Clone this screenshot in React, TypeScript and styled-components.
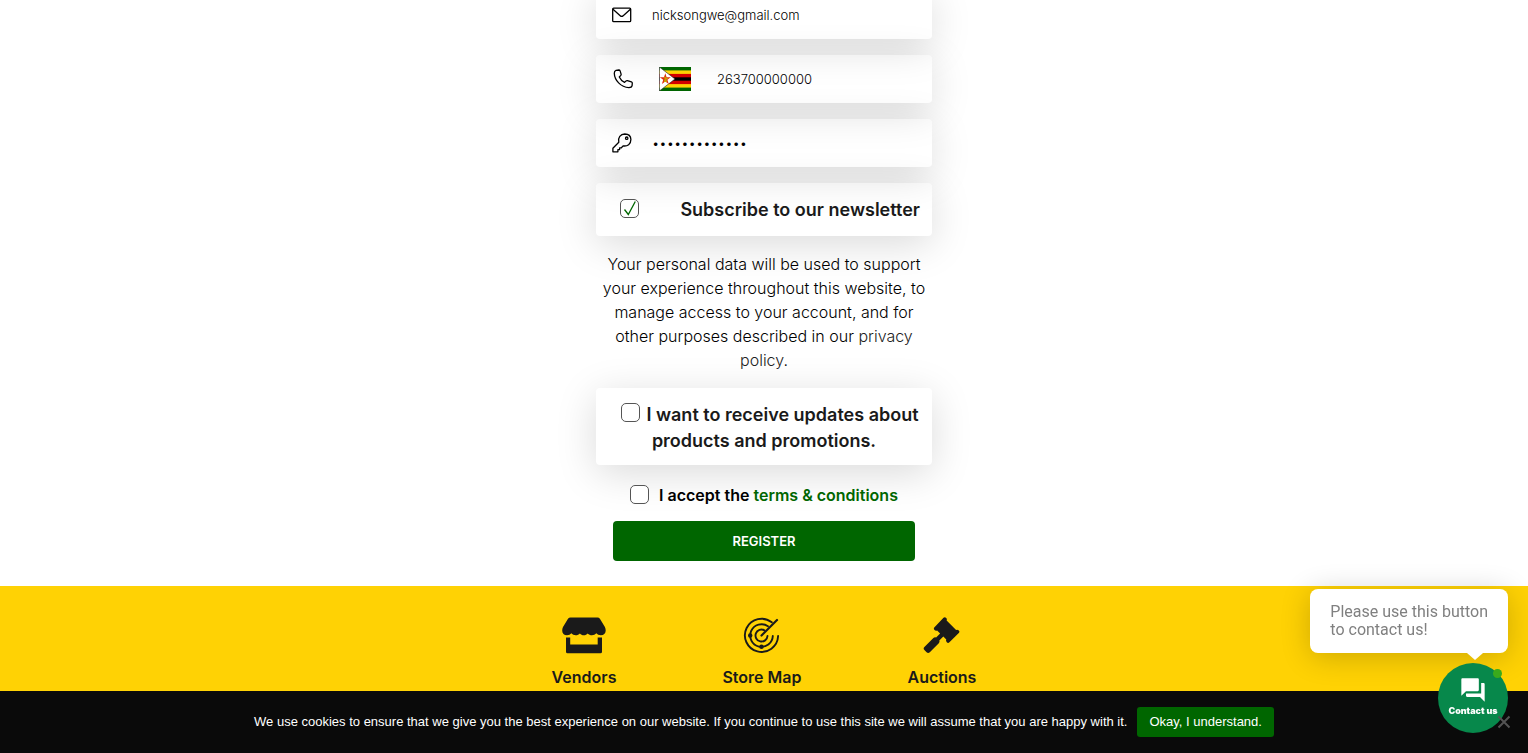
import React from "react";
import styled, { createGlobalStyle } from "styled-components";
import { MdForum } from "react-icons/md";

const GlobalStyle = createGlobalStyle`
  *, *::before, *::after { box-sizing: border-box; }
  body {
    margin: 0;
    background: #fff;
    color: #000;
    font-family: Inter, "Liberation Sans", sans-serif;
    overflow: hidden;
  }
  button, input { font: inherit; color: inherit; }
`;

const Page = styled.div`
  display: flex;
  flex-direction: column;
  min-height: 100vh;
`;

const Form = styled.form`
  display: flex;
  flex-direction: column;
  gap: 16px;
  width: 336px;
  max-width: 100%;
  margin: -9px auto 25px;
`;

const Card = styled.div`
  border-radius: 4px;
  box-shadow: 0 8px 40px rgba(0, 0, 0, 0.15);
`;

const Field = styled(Card)`
  display: flex;
  align-items: center;
  height: 48px;
  padding: 0 14px;
  gap: 18px;

  > svg { flex: none; }
`;

const TextInput = styled.input`
  flex: 1;
  min-width: 0;
  padding: 0;
  border: 0;
  outline: 0;
  background: transparent;
  font-size: 13px;
  font-weight: 350;
  line-height: 20px;
`;

const FlagButton = styled.button`
  display: flex;
  flex: none;
  margin: 0 8px 0 7px;
  padding: 0;
  border: 0;
  background: none;
`;

const Subscribe = styled(Card)`
  display: flex;
  align-items: center;
  justify-content: space-between;
  height: 53px;
  padding: 0 12px 0 24px;
`;

const Updates = styled(Card)`
  padding: 14px 12px 11px;
  text-align: center;
`;

const OptionLabel = styled.label`
  color: #1a1a1a;
  font-size: 18px;
  font-weight: 600;
  line-height: 26px;
`;

const CheckWrap = styled.span`
  position: relative;
  display: inline-flex;
  margin-bottom: 2px;

  svg {
    position: absolute;
    inset: 0;
    pointer-events: none;
  }
`;

const Box = styled.input`
  appearance: none;
  width: 19px;
  height: 19px;
  margin: 0;
  border: 1px solid #555;
  border-radius: 5px;
  background: #fff;
`;

const InlineBox = styled(Box)`
  margin: 0 6px 0 12px;
  vertical-align: -1px;
`;

const Notice = styled.p`
  margin: 0;
  font-size: 16px;
  font-weight: 350;
  line-height: 24px;
  text-align: center;
`;

const PolicyLink = styled.a`
  color: #222;
  text-decoration: none;
`;

const Accept = styled.div`
  display: flex;
  align-items: center;
  justify-content: center;
  gap: 10px;
  height: 24px;
  margin: 2px 0 -2px;
  color: #000;
  font-size: 16px;
  font-weight: 600;

  input { margin-bottom: 2px; }
`;

const TermsLink = styled.a`
  color: #060;
  text-decoration: none;
`;

const Register = styled.button`
  height: 40px;
  margin: 0 17px;
  border: 0;
  border-radius: 4px;
  background: #060;
  color: #fff;
  font-size: 13px;
  font-weight: 600;
`;

const Footer = styled.footer`
  flex: 1;
  display: flex;
  justify-content: center;
  gap: 106px;
  padding: 31px 0 80px;
  background: #ffd204;
`;

const FooterLink = styled.a`
  display: flex;
  flex-direction: column;
  align-items: center;
  gap: 11px;
  color: #1a1a1a;
  font-size: 16px;
  font-weight: 600;
  line-height: 24px;
  text-decoration: none;
`;

const CookieBar = styled.aside`
  position: fixed;
  inset: auto 0 0;
  display: flex;
  align-items: center;
  justify-content: center;
  gap: 10px;
  min-height: 62px;
  background: #0a0a0a;
  color: #fff;
  font-family: "Liberation Sans", Arial, sans-serif;
  font-size: 13px;
  line-height: 20px;
`;

const CookieButton = styled.button`
  height: 30px;
  padding: 0 12px;
  border: 0;
  border-radius: 3px;
  background: #060;
  color: #fff;
`;

const CloseButton = styled.button`
  position: fixed;
  right: 17px;
  bottom: 24px;
  display: flex;
  padding: 0;
  border: 0;
  background: none;
  color: #535353;
`;

const Widget = styled.div`
  position: fixed;
  right: 20px;
  bottom: 20px;
  display: flex;
  flex-direction: column;
  align-items: flex-end;
  gap: 10px;
`;

const Bubble = styled.div`
  position: relative;
  padding: 14px 20px;
  border-radius: 8px;
  background: #fff;
  box-shadow: 0 4px 30px rgba(0, 0, 0, 0.2);
  color: #808080;
  font-family: Roboto, sans-serif;
  font-size: 16px;
  line-height: 18px;

  &::after {
    content: "";
    position: absolute;
    top: 100%;
    right: 25px;
    border: solid transparent;
    border-width: 7px 8px 0;
    border-top-color: #fff;
  }
`;

const ContactButton = styled.button`
  position: relative;
  display: flex;
  flex-direction: column;
  align-items: center;
  gap: 1px;
  width: 70px;
  height: 70px;
  padding: 13px 0 0;
  border: 0;
  border-radius: 50%;
  background: #07884b;
  color: #fff;
  font-size: 9px;
  font-weight: 900;
  line-height: 12px;
  white-space: nowrap;

  &::after {
    content: "";
    position: absolute;
    top: 6px;
    right: 6px;
    width: 9px;
    height: 9px;
    border-radius: 50%;
    background: #3aaa1c;
  }
`;

const LineIcon = styled.svg.attrs({
  width: 24,
  height: 24,
  viewBox: "0 0 24 24",
  "aria-hidden": true,
})`
  fill: none;
  stroke: #000;
  stroke-width: 1.3;
  stroke-linecap: round;
  stroke-linejoin: round;
`;

const EnvelopeIcon = () => (
  <LineIcon>
    <rect x="2.700" y="5.200" width="18" height="13.500" rx="1" />
    <path d="m3 6.200 7.200 6.500q1.500 1.300 3 0l7.200-6.500" />
  </LineIcon>
);

const PhoneIcon = () => (
  <LineIcon>
    <path d="M6 3.400 8.800 3q1 0 1.300.9l1 3.200q.2.700-.3 1.300L9.300 10c1 2.300 3 4.300 5.300 5.400l1.500-1.500q.6-.5 1.300-.3l4 1.300q.9.300.9 1.100l-.2 2.600c-.3 1.500-1.600 2-3.200 2C10.800 20.200 4.500 13.200 4.300 6.200q0-2.300 1.700-2.800z" />
  </LineIcon>
);

const KeyIcon = () => (
  <LineIcon>
    <path d="M8.800 11.300C7.700 6.500 10.500 3.200 14.800 3c3.700 0 6 2.400 6.100 5.600 0 4.500-3.400 6.900-7.800 6.300l-1.700 1.900H9.600v1.800H7.900v2.200H2.900v-3.600z" />
    <circle cx="16.700" cy="7.200" r="1.200" />
  </LineIcon>
);

const ZimbabweFlag = () => (
  <svg width="32" height="24" viewBox="0 0 32 24" aria-hidden="true">
    <path fill="#060" d="M0 0h32v24H0z" />
    <path fill="#ffd204" d="M0 3.4h32v17.2H0z" />
    <path fill="#d40000" d="M0 6.9h32v10.2H0z" />
    <path fill="#000" d="M0 10.3h32v3.4H0z" />
    <path fill="#fff" stroke="#222" strokeWidth=".6" d="M.4 0v24L16 12z" />
    <path fill="#e02a10" d="m6.300 6.200 1.300 4.100h4.200l-3.400 2.500 1.300 4.100-3.400-2.500L2.900 16.900l1.300-4.100L.800 10.300H5z" />
    <path fill="#c9a300" d="m5 9 2 1.600 2.500.4-2 1.500.5 2.500H4.800L5.600 12z" />
  </svg>
);

const StoreIcon = () => (
  <svg width="44" height="37" viewBox="0 0 44 37" fill="#1a1a1a" aria-hidden="true">
    <path d="M8.500.500h27q1.500 0 2.400 1.300l5 8.200q.8 1.500.8 3.500c0 3-2 4.700-4.900 4.700-2 0-3.400-.8-4.400-2-1.200 1.300-2.800 2-4.500 2-1.700 0-3.100-.7-4.200-1.800-1.100 1.100-2.200 1.800-3.900 1.800-1.700 0-2.900-.7-3.900-1.800-1.100 1.100-2.500 1.800-4.200 1.800-1.700 0-3.300-.7-4.400-2-1 1.200-2.300 2-4.300 2-3 0-4.800-1.700-4.800-4.700q0-2 .8-3.500l5-8.200Q7 .5 8.500.5z" />
    <path d="M4 20.500h4.200V27.500h27.500v-7H40v14.300q0 1.500-1.500 1.500h-33Q4 36.300 4 34.800z" />
  </svg>
);

const RadarIcon = () => (
  <svg width="37" height="37" viewBox="0 0 37 37" fill="none" stroke="#1a1a1a" strokeWidth="1.900" strokeLinecap="round" aria-hidden="true">
    <path d="M28.800 5.300A16.600 16.600 0 1 0 35.100 19" />
    <path d="M25 9.300A11.300 11.300 0 1 0 29.800 19" />
    <path d="M21.400 13.300A6 6 0 1 0 24.500 19" />
    <path d="M18.500 18.500 34 3" strokeWidth="2.200" />
    <circle cx="7.200" cy="18.500" r="1.300" fill="#1a1a1a" />
    <circle cx="18.500" cy="29.800" r="1.300" fill="#1a1a1a" />
  </svg>
);

const GavelIcon = () => (
  <svg width="37" height="37" viewBox="0 0 37 37" fill="#1a1a1a" aria-hidden="true">
    <path d="M20.500.800q1.200-1.200 2.500 0 1.300 1.300.6 2.600l9.500 9.500q1.400-.7 2.700.5 1.300 1.300 0 2.500L26.400 25.300q-1.300 1.200-2.600 0-1.200-1.300-.5-2.700l-3-3-4 4q.6 1.300-.5 2.600l-9 9q-1.600 1.500-3.200 0l-2.200-2.200q-1.500-1.500 0-3.100l9-9q1.300-1.200 2.700-.5l4-4-3-3q-1.400.7-2.600-.5-1.300-1.400 0-2.600z" />
  </svg>
);

export default function App() {
  return (
    <Page>
      <GlobalStyle />
      <Form onSubmit={(event) => event.preventDefault()}>
        <Field>
          <EnvelopeIcon />
          <TextInput type="email" aria-label="Email address" defaultValue="nicksongwe@gmail.com" />
        </Field>
        <Field>
          <PhoneIcon />
          <FlagButton type="button" aria-label="Zimbabwe"><ZimbabweFlag /></FlagButton>
          <TextInput type="tel" aria-label="Phone number" defaultValue="263700000000" />
        </Field>
        <Field>
          <KeyIcon />
          <TextInput type="password" aria-label="Password" defaultValue="longpassword1" />
        </Field>
        <Subscribe>
          <CheckWrap>
            <Box type="checkbox" id="newsletter" defaultChecked />
            <svg width="19" height="19" viewBox="0 0 19 19" fill="none" stroke="#060" strokeWidth="1.300" aria-hidden="true">
              <path d="m4.500 10.500 3.800 5L15.300 2.500" />
            </svg>
          </CheckWrap>
          <OptionLabel htmlFor="newsletter">Subscribe to our newsletter</OptionLabel>
        </Subscribe>
        <Notice>
          Your personal data will be used to support your experience throughout this website, to manage
          access to your account, and for other purposes described in our{" "}
          <PolicyLink href="#privacy">privacy policy</PolicyLink>.
        </Notice>
        <Updates>
          <OptionLabel>
            <InlineBox type="checkbox" />
            I want to receive updates about products and promotions.
          </OptionLabel>
        </Updates>
        <Accept>
          <Box type="checkbox" id="terms" />
          <label htmlFor="terms">
            I accept the <TermsLink href="#terms">terms &amp; conditions</TermsLink>
          </label>
        </Accept>
        <Register type="submit">REGISTER</Register>
      </Form>
      <Footer>
        <FooterLink href="#vendors"><StoreIcon />Vendors</FooterLink>
        <FooterLink href="#map"><RadarIcon />Store Map</FooterLink>
        <FooterLink href="#auctions"><GavelIcon />Auctions</FooterLink>
      </Footer>
      <CookieBar aria-label="Cookie notice">
        <span>
          We use cookies to ensure that we give you the best experience on our website. If you continue to
          use this site we will assume that you are happy with it.
        </span>
        <CookieButton type="button">Okay, I understand.</CookieButton>
      </CookieBar>
      <Widget>
        <Bubble>Please use this button<br />to contact us!</Bubble>
        <ContactButton type="button"><MdForum size={28} />Contact us</ContactButton>
      </Widget>
      <CloseButton type="button" aria-label="Close">
        <svg width="14" height="14" viewBox="0 0 14 14" stroke="currentColor" strokeWidth="2" aria-hidden="true">
          <path d="m1.500 1.500 11 11m0-11-11 11" />
        </svg>
      </CloseButton>
    </Page>
  );
}
